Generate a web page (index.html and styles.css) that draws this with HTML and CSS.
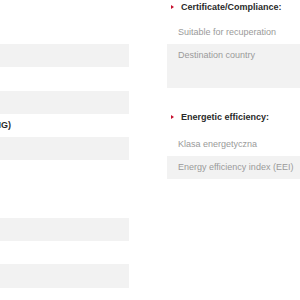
FILE: index.html
```html
<!DOCTYPE html>
<html>
<head>
<meta charset="utf-8">
<link rel="stylesheet" href="styles.css">
</head>
<body>
<div class="page">
  <div class="col left">
    <div class="row"></div>
    <div class="row alt"></div>
    <div class="row"></div>
    <div class="row alt"></div>
    <div class="row"><div class="cut"><span class="strong">Type of packaging (PACKAGING)</span></div></div>
    <div class="row alt"></div>
    <div class="row tall"></div>
    <div class="row alt"></div>
    <div class="row"></div>
    <div class="row alt"></div>
  </div>
  <div class="col right">
    <h3 class="head first">Certificate/Compliance:</h3>
    <div class="row">Suitable for recuperation</div>
    <div class="row alt big">Destination country</div>
    <h3 class="head second">Energetic efficiency:</h3>
    <div class="row">Klasa energetyczna</div>
    <div class="row alt">Energy efficiency index (EEI)</div>
  </div>
</div>
</body>
</html>
```
FILE: styles.css
```css
html, body {
  margin: 0;
  padding: 0;
  background: #fff;
}
body {
  font-family: "Liberation Sans", Arial, sans-serif;
  font-size: 9px;
  color: #9a9a9a;
  overflow: hidden;
}
.page {
  display: grid;
  grid-template-columns: 129px 1fr;
  column-gap: 38px;
}
.col {
  display: flex;
  flex-direction: column;
}
.left {
  padding-top: 20.7px;
}
.row {
  height: 23.3px;
  line-height: 11px;
  padding: 6.2px 11px 0 11px;
  box-sizing: border-box;
  white-space: nowrap;
}
.left .row {
  padding: 0;
  display: flex;
  align-items: center;
}
.row.alt {
  background: #f2f2f2;
}
.row.tall {
  height: 57.2px;
}
.row.big {
  height: 43.8px;
}
.cut {
  width: 11px;
  flex-shrink: 0;
  display: flex;
  justify-content: flex-end;
  white-space: nowrap;
}
.strong {
  font-weight: bold;
  color: #2a2a2a;
}
.head {
  margin: 0;
  font-size: 9px;
  font-weight: bold;
  color: #2a2a2a;
  line-height: 14px;
  display: flex;
  align-items: center;
  padding-left: 4px;
}
.head::before {
  content: "";
  width: 0;
  height: 0;
  border-left: 3px solid #c8102e;
  border-top: 2.5px solid transparent;
  border-bottom: 2.5px solid transparent;
  margin-right: 7px;
}
.head.first {
  margin-bottom: 7px;
}
.head.second {
  margin-top: 22px;
  margin-bottom: 8.5px;
}
```
